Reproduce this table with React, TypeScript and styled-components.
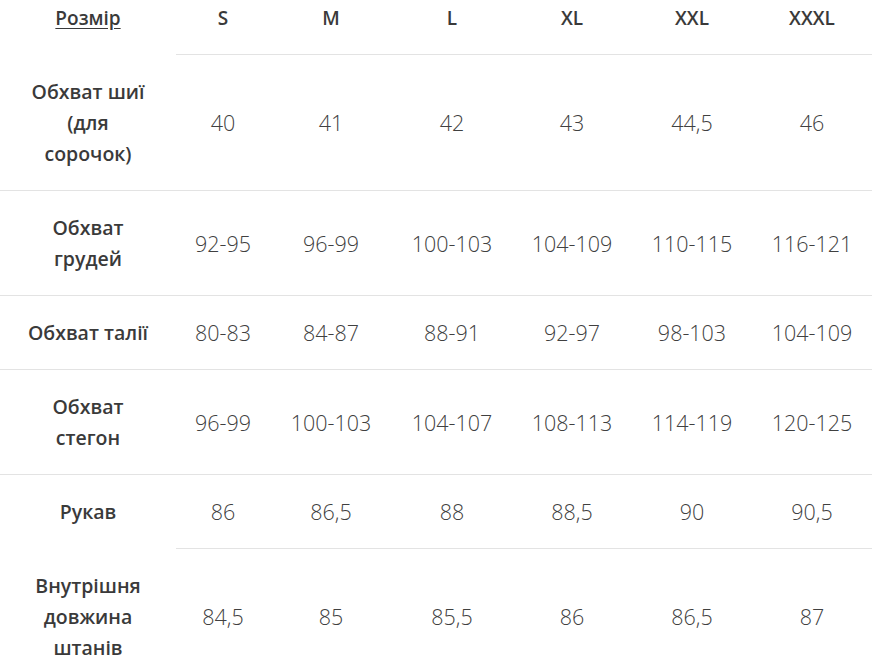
import styled, { createGlobalStyle } from "styled-components";

const GlobalStyles = createGlobalStyle`
  html, body {
    margin: 0;
    padding: 0;
    background: #ffffff;
  }
  body {
    font-family: "Open Sans", "Noto Sans", sans-serif;
    overflow: hidden;
  }
`;

const Table = styled.table`
  width: 872px;
  border-collapse: collapse;
  table-layout: fixed;
  color: #3a3a3a;
`;

const HeadCell = styled.th<{ $plain?: boolean }>`
  padding: 3px 2px 20px;
  font-size: 19px;
  font-weight: 600;
  line-height: 31px;
  text-align: center;
  color: #3a3a3a;
  border-bottom: 1px solid ${({ $plain }) => ($plain ? "transparent" : "#e3e3e3")};
`;

const SizeLink = styled.span`
  text-decoration: underline;
  text-underline-offset: 3px;
`;

const Label = styled.td<{ $plain?: boolean }>`
  padding: 21px 4px;
  font-size: 19.5px;
  font-weight: 600;
  line-height: 31px;
  text-align: center;
  color: #3a3a3a;
  border-bottom: 1px solid ${({ $plain }) => ($plain ? "transparent" : "#e3e3e3")};
`;

const Value = styled.td`
  padding: 21px 2px;
  font-size: 21.5px;
  font-weight: 300;
  line-height: 31px;
  text-align: center;
  color: #404040;
  border-bottom: 1px solid #e3e3e3;
`;

const sizes = ["S", "M", "L", "XL", "XXL", "XXXL"];
const widths = [176, 94, 122, 120, 120, 120, 120];

const rows: { label: string[]; values: string[]; plain?: boolean }[] = [
  { label: ["Обхват шиї", "(для", "сорочок)"], values: ["40", "41", "42", "43", "44,5", "46"] },
  { label: ["Обхват", "грудей"], values: ["92-95", "96-99", "100-103", "104-109", "110-115", "116-121"] },
  { label: ["Обхват талії"], values: ["80-83", "84-87", "88-91", "92-97", "98-103", "104-109"] },
  { label: ["Обхват", "стегон"], values: ["96-99", "100-103", "104-107", "108-113", "114-119", "120-125"] },
  { label: ["Рукав"], values: ["86", "86,5", "88", "88,5", "90", "90,5"], plain: true },
  { label: ["Внутрішня", "довжина", "штанів"], values: ["84,5", "85", "85,5", "86", "86,5", "87"] },
];

export default function App() {
  return (
    <>
      <GlobalStyles />
      <Table>
        <colgroup>
          {widths.map((w, i) => (
            <col key={i} style={{ width: w }} />
          ))}
        </colgroup>
        <thead>
          <tr>
            <HeadCell $plain>
              <SizeLink>Розмір</SizeLink>
            </HeadCell>
            {sizes.map((s) => (
              <HeadCell key={s}>{s}</HeadCell>
            ))}
          </tr>
        </thead>
        <tbody>
          {rows.map((r, i) => (
            <tr key={i}>
              <Label $plain={r.plain}>
                {r.label.map((l, j) => (
                  <div key={j}>{l}</div>
                ))}
              </Label>
              {r.values.map((v, j) => (
                <Value key={j}>{v}</Value>
              ))}
            </tr>
          ))}
        </tbody>
      </Table>
    </>
  );
}
